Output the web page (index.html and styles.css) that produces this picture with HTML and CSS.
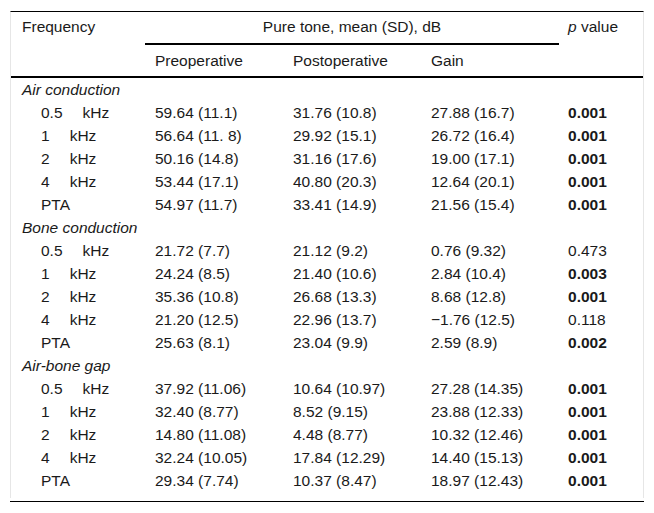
FILE: index.html
```html
<!DOCTYPE html>
<html>
<head>
<meta charset="utf-8">
<link rel="stylesheet" href="styles.css">
</head>
<body>
<div class="frame">
<table class="tbl">
<colgroup>
<col class="c1"><col class="c2"><col class="c3"><col class="c4"><col class="c5">
</colgroup>
<thead>
<tr>
<th rowspan="2" class="hd-tall">Frequency</th>
<th colspan="3" class="hd-group">Pure tone, mean (SD), dB</th>
<th rowspan="2" class="hd-tall"><i>p</i> value</th>
</tr>
<tr>
<th class="hd-sub">Preoperative</th>
<th class="hd-sub">Postoperative</th>
<th class="hd-sub">Gain</th>
</tr>
</thead>
<tbody>
<tr class="grp"><td colspan="5">Air conduction</td></tr>
<tr><td class="f"><span>0.5</span><span class="u">kHz</span></td><td>59.64 (11.1)</td><td>31.76 (10.8)</td><td>27.88 (16.7)</td><td class="b">0.001</td></tr>
<tr><td class="f"><span>1</span><span class="u">kHz</span></td><td>56.64 (11. 8)</td><td>29.92 (15.1)</td><td>26.72 (16.4)</td><td class="b">0.001</td></tr>
<tr><td class="f"><span>2</span><span class="u">kHz</span></td><td>50.16 (14.8)</td><td>31.16 (17.6)</td><td>19.00 (17.1)</td><td class="b">0.001</td></tr>
<tr><td class="f"><span>4</span><span class="u">kHz</span></td><td>53.44 (17.1)</td><td>40.80 (20.3)</td><td>12.64 (20.1)</td><td class="b">0.001</td></tr>
<tr><td class="f">PTA</td><td>54.97 (11.7)</td><td>33.41 (14.9)</td><td>21.56 (15.4)</td><td class="b">0.001</td></tr>
<tr class="grp"><td colspan="5">Bone conduction</td></tr>
<tr><td class="f"><span>0.5</span><span class="u">kHz</span></td><td>21.72 (7.7)</td><td>21.12 (9.2)</td><td>0.76 (9.32)</td><td>0.473</td></tr>
<tr><td class="f"><span>1</span><span class="u">kHz</span></td><td>24.24 (8.5)</td><td>21.40 (10.6)</td><td>2.84 (10.4)</td><td class="b">0.003</td></tr>
<tr><td class="f"><span>2</span><span class="u">kHz</span></td><td>35.36 (10.8)</td><td>26.68 (13.3)</td><td>8.68 (12.8)</td><td class="b">0.001</td></tr>
<tr><td class="f"><span>4</span><span class="u">kHz</span></td><td>21.20 (12.5)</td><td>22.96 (13.7)</td><td>&minus;1.76 (12.5)</td><td>0.118</td></tr>
<tr><td class="f">PTA</td><td>25.63 (8.1)</td><td>23.04 (9.9)</td><td>2.59 (8.9)</td><td class="b">0.002</td></tr>
<tr class="grp"><td colspan="5">Air-bone gap</td></tr>
<tr><td class="f"><span>0.5</span><span class="u">kHz</span></td><td>37.92 (11.06)</td><td>10.64 (10.97)</td><td>27.28 (14.35)</td><td class="b">0.001</td></tr>
<tr><td class="f"><span>1</span><span class="u">kHz</span></td><td>32.40 (8.77)</td><td>8.52 (9.15)</td><td>23.88 (12.33)</td><td class="b">0.001</td></tr>
<tr><td class="f"><span>2</span><span class="u">kHz</span></td><td>14.80 (11.08)</td><td>4.48 (8.77)</td><td>10.32 (12.46)</td><td class="b">0.001</td></tr>
<tr><td class="f"><span>4</span><span class="u">kHz</span></td><td>32.24 (10.05)</td><td>17.84 (12.29)</td><td>14.40 (15.13)</td><td class="b">0.001</td></tr>
<tr><td class="f">PTA</td><td>29.34 (7.74)</td><td>10.37 (8.47)</td><td>18.97 (12.43)</td><td class="b">0.001</td></tr>
</tbody>
</table>
</div>
<div class="endline"></div>
</body>
</html>
```

FILE: styles.css
```css
html, body {
  margin: 0;
  padding: 0;
  background: #ffffff;
}

body {
  padding: 11px 0 0 10px;
  font-family: "Liberation Sans", Arial, sans-serif;
  font-size: 15.5px;
  color: #1a1a1a;
}

.frame {
  width: 632px;
  border-top: 1px solid #000;
  border-left: 1px solid #e6e6e6;
  border-right: 1px solid #e6e6e6;
  padding-bottom: 6px;
}

.endline {
  width: 634px;
  margin-top: 3px;
  border-top: 1px solid #000;
}

.tbl {
  border-collapse: separate;
  border-spacing: 0;
  table-layout: fixed;
  width: 632px;
}

.c1 { width: 134px; }
.c2, .c3, .c4 { width: 138px; }
.c5 { width: 84px; }

th {
  font-weight: normal;
  text-align: left;
  line-height: 18px;
  padding: 6px 10px 7px 10px;
  vertical-align: top;
}

.hd-tall {
  border-bottom: 2px solid #000;
}

.hd-tall:first-child {
  padding-left: 11px;
}

.hd-tall:last-child {
  padding-left: 9px;
}

.hd-group {
  text-align: center;
  padding: 6px 0 7px 0;
  border-bottom: 2px solid #000;
}

.hd-sub {
  padding: 7px 10px 6px 10px;
  border-bottom: 2px solid #000;
}

td {
  line-height: 23px;
  padding: 0 10px;
  white-space: nowrap;
}

td:last-child {
  padding-left: 9px;
}

.grp td {
  font-style: italic;
  padding-left: 11px;
}

.f {
  padding-left: 30px;
}

.u {
  margin-left: 20px;
}

.b {
  font-weight: bold;
}
```
